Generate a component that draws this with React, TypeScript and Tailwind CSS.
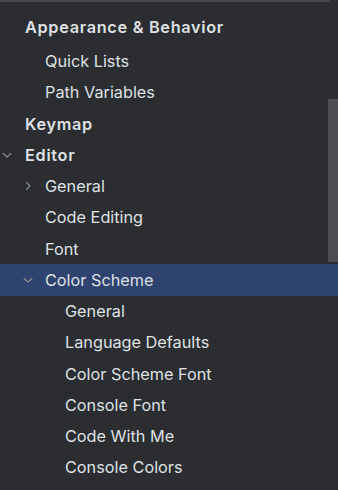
import React from 'react';

type Node = {
    label: string;
    level: number;
    bold?: boolean;
    chevron?: 'down' | 'right';
    selected?: boolean;
};

const items: Node[] = [
    { label: 'Quick Lists', level: 1 },
    { label: 'Path Variables', level: 1 },
    { label: 'Keymap', level: 0, bold: true },
    { label: 'Editor', level: 0, bold: true, chevron: 'down' },
    { label: 'General', level: 1, chevron: 'right' },
    { label: 'Code Editing', level: 1 },
    { label: 'Font', level: 1 },
    { label: 'Color Scheme', level: 1, chevron: 'down', selected: true },
    { label: 'General', level: 2 },
    { label: 'Language Defaults', level: 2 },
    { label: 'Color Scheme Font', level: 2 },
    { label: 'Console Font', level: 2 },
    { label: 'Code With Me', level: 2 },
    { label: 'Console Colors', level: 2 },
];

const Chevron: React.FC<{ dir: 'down' | 'right' }> = ({ dir }) => (
    <svg width="10" height="10" viewBox="0 0 10 10" fill="none" stroke="#8c9097" strokeWidth="1.1" strokeLinecap="round" strokeLinejoin="round">
        {dir === 'down'
            ? <path d="M1 3.5 L5 7 L9 3.5" />
            : <path d="M3.5 1.5 L7 5 L3.5 8.5" />}
    </svg>
);

const Row: React.FC<{ node: Node }> = ({ node }) => {
    const indent = node.level === 0 ? 'pl-[25px]' : node.level === 1 ? 'pl-[45px]' : 'pl-[65px]';
    const chevronPos = node.level === 0 ? 'left-[2px]' : 'left-[23px]';
    return (
        <div className={`relative h-[31.25px] flex items-center ${indent} ${node.selected ? 'bg-[#2e436e]' : ''}`}>
            {node.chevron && (
                <span className={`absolute top-1/2 -translate-y-1/2 ${chevronPos} flex`}>
                    <Chevron dir={node.chevron} />
                </span>
            )}
            <span className={`text-[16.25px] leading-none text-[#dfe1e5] ${node.bold ? 'font-semibold tracking-[0.7px]' : 'font-normal'}`}>
                {node.label}
            </span>
        </div>
    );
};

export default function App() {
    return (
        <div className="relative w-[338px] h-[490px] overflow-hidden bg-[#2b2d30]" style={{ fontFamily: 'Inter, "Noto Sans", sans-serif' }}>
            {/* bottom edge of the search field */}
            <div className="w-[330px] h-[2px] border-b-2 border-r-2 border-[#46484d] rounded-br-[3px]" />

            <div className="pt-[10px]">
                <div className="h-[31px] flex items-center pl-[25px]">
                    <span className="text-[16.25px] leading-none font-semibold tracking-[0.7px] text-[#dfe1e5]">Appearance &amp; Behavior</span>
                </div>
                <div className="mt-[2.5px]">
                    {items.map((n, i) => (
                        <Row key={i} node={n} />
                    ))}
                </div>
            </div>

            {/* scrollbar thumb */}
            <div className="absolute right-0 top-[99px] w-[10px] h-[163px] bg-[#4d4e51]" />
        </div>
    );
}
